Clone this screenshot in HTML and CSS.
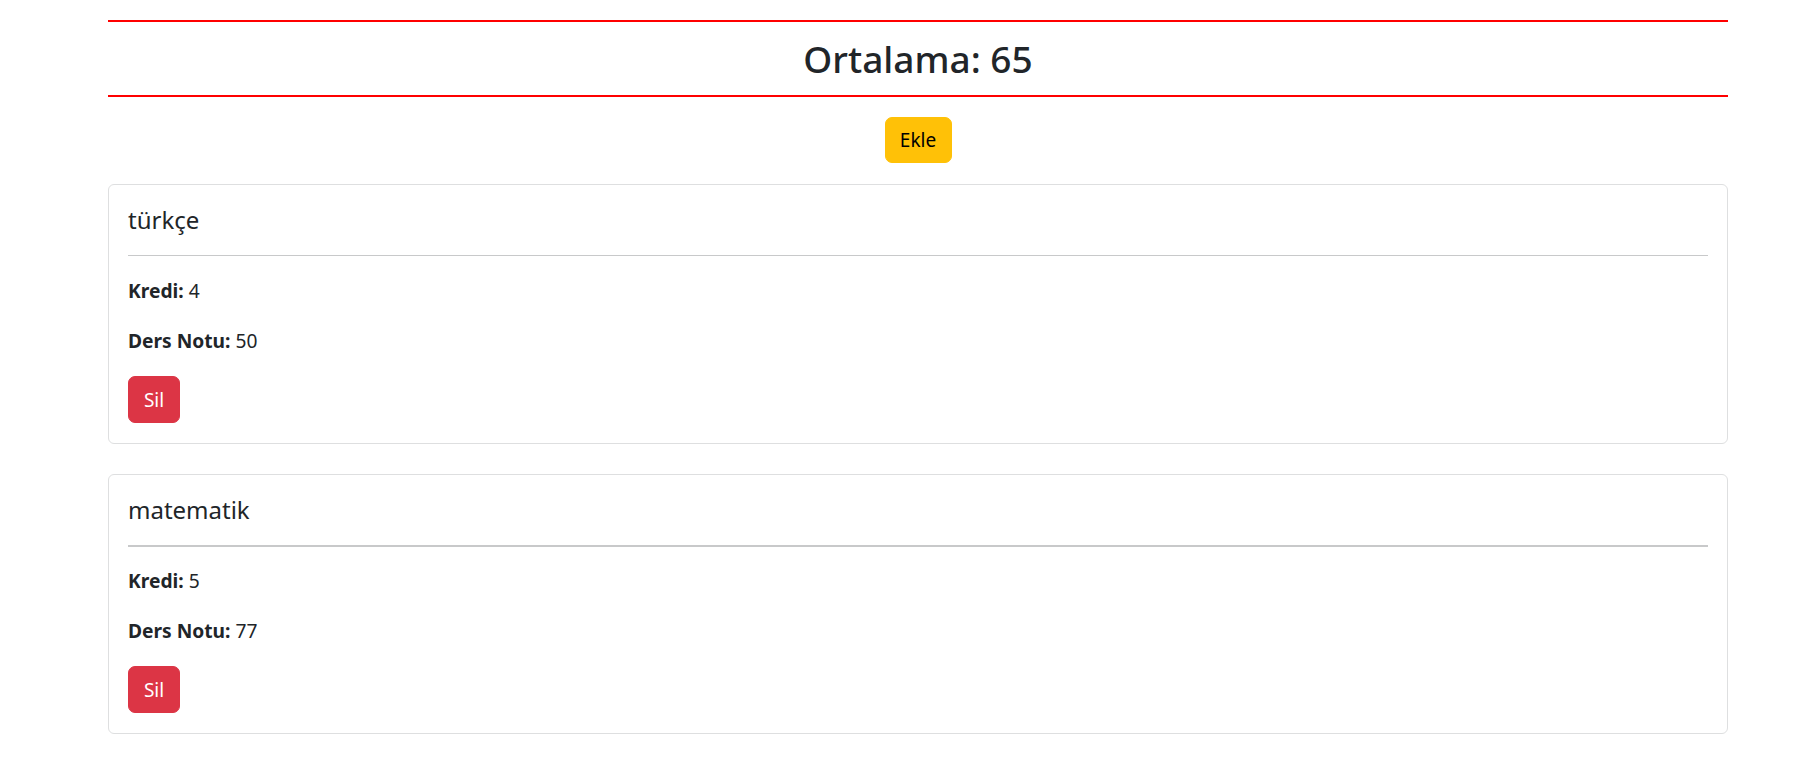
FILE: index.html
```html
<!DOCTYPE html>
<html lang="tr">
<head>
<meta charset="utf-8">
<title>Ortalama</title>
<link rel="stylesheet" href="styles.css">
</head>
<body>
<div class="container">
  <hr class="red-line">
  <h3 class="average">Ortalama: 65</h3>
  <hr class="red-line">
  <div class="add-row">
    <button class="btn btn-warning">Ekle</button>
  </div>
  <div class="card">
    <h5 class="card-title">türkçe</h5>
    <hr class="card-sep">
    <p><strong>Kredi:</strong> 4</p>
    <p><strong>Ders Notu:</strong> 50</p>
    <button class="btn btn-danger">Sil</button>
  </div>
  <div class="card">
    <h5 class="card-title">matematik</h5>
    <hr class="card-sep thick">
    <p><strong>Kredi:</strong> 5</p>
    <p><strong>Ders Notu:</strong> 77</p>
    <button class="btn btn-danger">Sil</button>
  </div>
</div>
</body>
</html>
```

FILE: styles.css
```css
* { box-sizing: border-box; }
html, body { margin: 0; padding: 0; background: #fff; }
body {
  font-family: "Noto Sans", "Open Sans", sans-serif;
  font-size: 19.2px;
  line-height: 30px;
  color: #212529;
}
.container {
  margin-left: 108px;
  width: 1620px;
  padding-top: 20px;
}
.red-line {
  margin: 0;
  border: 0;
  border-top: 2px solid #ff0000;
  height: 0;
}
.average {
  margin: 0;
  height: 73px;
  display: flex;
  align-items: center;
  justify-content: center;
  font-size: 37px;
  font-weight: 500;
  line-height: 42px;
}
.add-row {
  display: flex;
  justify-content: center;
  padding: 20px 0 21px;
}
.btn {
  font-family: inherit;
  font-size: 19px;
  line-height: 28px;
  border: 1px solid transparent;
  border-radius: 7px;
  cursor: pointer;
  padding: 0;
}
.btn-warning {
  background: #ffc107;
  border-color: #ffc107;
  color: #000;
  width: 67px;
  height: 46px;
}
.btn-danger {
  background: #dc3545;
  border-color: #dc3545;
  color: #fff;
  width: 52px;
  height: 47px;
}
.card {
  border: 1px solid #dedfe0;
  border-radius: 6px;
  padding: 20px 19px;
  margin-bottom: 30px;
  height: 260px;
}
.card-title {
  margin: 0;
  font-size: 24px;
  font-weight: 400;
  line-height: 30px;
}
.card-sep {
  margin: 20px 0;
  border: 0;
  border-top: 1px solid #c8c9ca;
  height: 0;
}
.card-sep.thick { border-top-width: 2px; margin-bottom: 19px; }
p { margin: 0 0 20px; }
strong { font-weight: 700; }
```
